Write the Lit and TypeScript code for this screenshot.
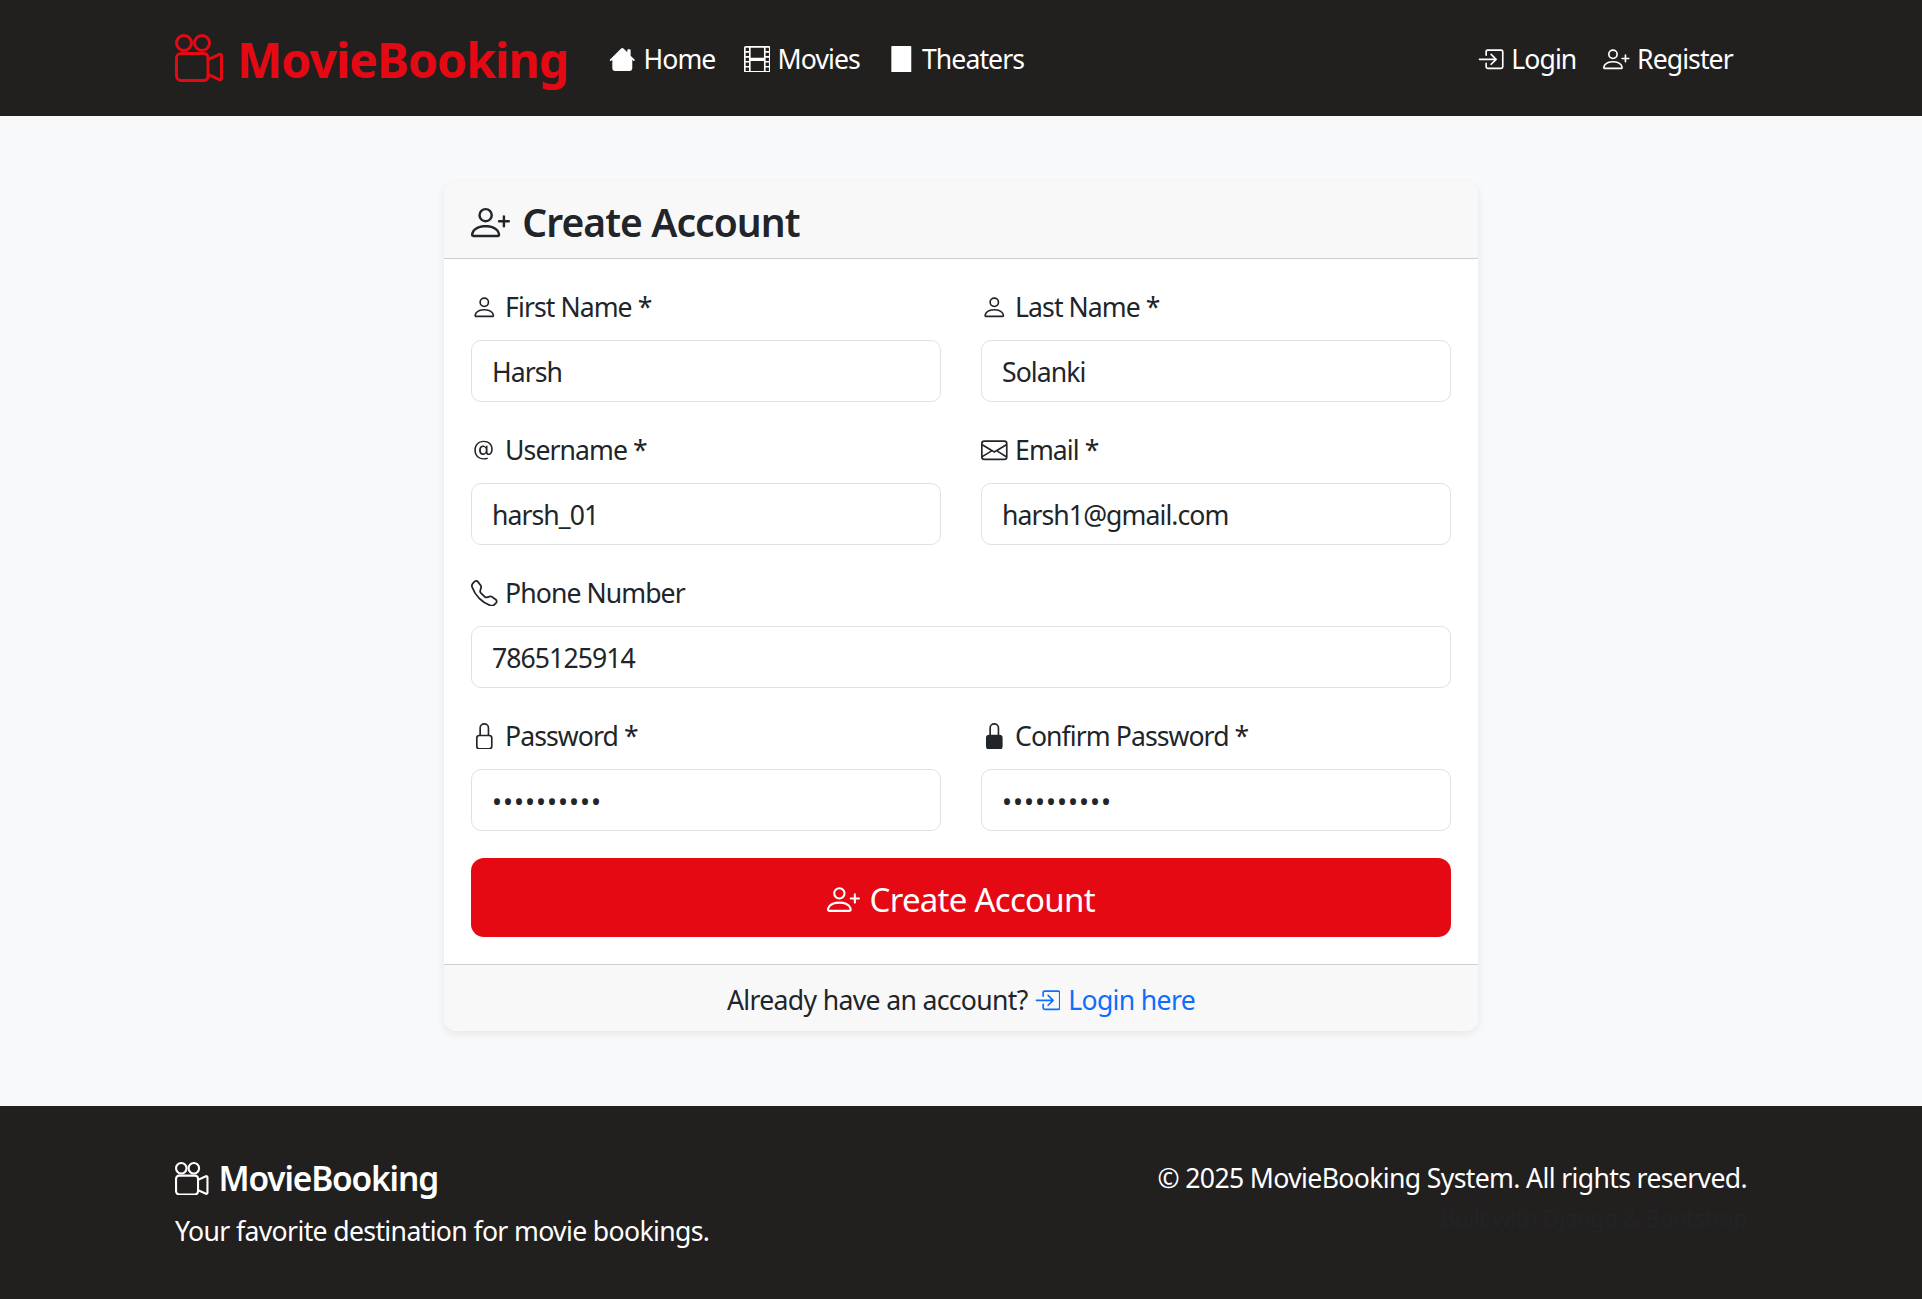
import { LitElement, html, css, svg } from 'lit';
import { customElement } from 'lit/decorators.js';

const ICONS = {
  reels: svg`<path d="M6 3a3 3 0 1 1-6 0 3 3 0 0 1 6 0M1 3a2 2 0 1 0 4 0 2 2 0 0 0-4 0"/><path d="M9 6h.5a2 2 0 0 1 1.983 1.738l3.11-1.382A1 1 0 0 1 16 7.269v7.462a1 1 0 0 1-1.406.913l-3.111-1.382A2 2 0 0 1 9.5 16H2a2 2 0 0 1-2-2V8a2 2 0 0 1 2-2zm6 8.73V7.27l-3.5 1.555v4.35zM1 8v6a1 1 0 0 0 1 1h7.5a1 1 0 0 0 1-1V8a1 1 0 0 0-1-1H2a1 1 0 0 0-1 1"/><path d="M9 6a3 3 0 1 0 0-6 3 3 0 0 0 0 6M7 3a2 2 0 1 1 4 0 2 2 0 0 1-4 0"/>`,
  house: svg`<path d="M8.707 1.5a1 1 0 0 0-1.414 0L.646 8.146a.5.5 0 0 0 .708.708L2 8.207V13.5A1.5 1.5 0 0 0 3.5 15h9a1.5 1.5 0 0 0 1.5-1.5V8.207l.646.647a.5.5 0 0 0 .708-.708L13 5.793V2.5a.5.5 0 0 0-.5-.5h-1a.5.5 0 0 0-.5.5v1.293z"/>`,
  film: svg`<path d="M0 1a1 1 0 0 1 1-1h14a1 1 0 0 1 1 1v14a1 1 0 0 1-1 1H1a1 1 0 0 1-1-1zm4 0v6h8V1zm8 8H4v6h8zM1 1v2h2V1zm2 3H1v2h2zM1 7v2h2V7zm2 3H1v2h2zm-2 3v2h2v-2zM15 1h-2v2h2zm-2 3v2h2V4zm2 3h-2v2h2zm-2 3v2h2v-2zm2 3h-2v2h2z"/>`,
  file: svg`<path d="M2.5 0h11a.5.5 0 0 1 .5.5v15a.5.5 0 0 1-.5.5h-11a.5.5 0 0 1-.5-.5V.5a.5.5 0 0 1 .5-.5"/>`,
  login: svg`<path fill-rule="evenodd" d="M6 3.5a.5.5 0 0 1 .5-.5h8a.5.5 0 0 1 .5.5v9a.5.5 0 0 1-.5.5h-8a.5.5 0 0 1-.5-.5v-2a.5.5 0 0 0-1 0v2A1.5 1.5 0 0 0 6.5 14h8a1.5 1.5 0 0 0 1.5-1.5v-9A1.5 1.5 0 0 0 14.5 2h-8A1.5 1.5 0 0 0 5 3.5v2a.5.5 0 0 0 1 0z"/><path fill-rule="evenodd" d="M11.854 8.354a.5.5 0 0 0 0-.708l-3-3a.5.5 0 1 0-.708.708L10.293 7.5H1.5a.5.5 0 0 0 0 1h8.793l-2.147 2.146a.5.5 0 0 0 .708.708z"/>`,
  personPlus: svg`<path d="M6 8a3 3 0 1 0 0-6 3 3 0 0 0 0 6m2-3a2 2 0 1 1-4 0 2 2 0 0 1 4 0m4 8c0 1-1 1-1 1H1s-1 0-1-1 1-4 6-4 6 3 6 4m-1-.004c-.001-.246-.154-.986-.832-1.664C9.516 10.68 8.289 10 6 10s-3.516.68-4.168 1.332c-.678.678-.83 1.418-.832 1.664z"/><path fill-rule="evenodd" d="M13.5 5a.5.5 0 0 1 .5.5V7h1.5a.5.5 0 0 1 0 1H14v1.5a.5.5 0 0 1-1 0V8h-1.5a.5.5 0 0 1 0-1H13V5.5a.5.5 0 0 1 .5-.5"/>`,
  person: svg`<path d="M8 8a3 3 0 1 0 0-6 3 3 0 0 0 0 6m2-3a2 2 0 1 1-4 0 2 2 0 0 1 4 0m4 8c0 1-1 1-1 1H3s-1 0-1-1 1-4 6-4 6 3 6 4m-1-.004c-.001-.246-.154-.986-.832-1.664C11.516 10.68 10.289 10 8 10s-3.516.68-4.168 1.332c-.678.678-.83 1.418-.832 1.664z"/>`,
  at: svg`<path d="M13.106 7.222c0-2.967-2.249-5.032-5.482-5.032-3.35 0-5.646 2.318-5.646 5.702 0 3.493 2.235 5.708 5.762 5.708.862 0 1.689-.123 2.304-.335v-.862c-.43.199-1.354.328-2.29.328-2.926 0-4.813-1.88-4.813-4.798 0-2.844 1.921-4.881 4.594-4.881 2.735 0 4.608 1.688 4.608 4.156 0 1.682-.554 2.769-1.416 2.769-.492 0-.772-.28-.772-.76V5.206H8.923v.834h-.11c-.266-.595-.881-.964-1.6-.964-1.4 0-2.378 1.162-2.378 2.823 0 1.737.957 2.906 2.379 2.906.8 0 1.415-.39 1.709-1.087h.11c.081.67.703 1.148 1.503 1.148 1.572 0 2.57-1.415 2.57-3.643zm-7.177.704c0-1.197.54-1.907 1.456-1.907.93 0 1.524.738 1.524 1.907S8.308 9.84 7.371 9.84c-.895 0-1.442-.725-1.442-1.914"/>`,
  envelope: svg`<path d="M0 4a2 2 0 0 1 2-2h12a2 2 0 0 1 2 2v8a2 2 0 0 1-2 2H2a2 2 0 0 1-2-2zm2-1a1 1 0 0 0-1 1v.217l7 4.2 7-4.2V4a1 1 0 0 0-1-1zm13 2.383-4.708 2.825L15 11.105zm-.034 6.876-5.64-3.471L8 9.583l-1.326-.795-5.64 3.47A1 1 0 0 0 2 13h12a1 1 0 0 0 .966-.741M1 11.105l4.708-2.897L1 5.383z"/>`,
  telephone: svg`<path d="M3.654 1.328a.678.678 0 0 0-1.015-.063L1.605 2.3c-.483.484-.661 1.169-.45 1.77a17.6 17.6 0 0 0 4.168 6.608 17.6 17.6 0 0 0 6.608 4.168c.601.211 1.286.033 1.77-.45l1.034-1.034a.678.678 0 0 0-.063-1.015l-2.307-1.794a.68.68 0 0 0-.58-.122l-2.19.547a1.75 1.75 0 0 1-1.657-.459L5.482 8.062a1.75 1.75 0 0 1-.46-1.657l.548-2.19a.68.68 0 0 0-.122-.58zM1.884.511a1.745 1.745 0 0 1 2.612.163L6.29 2.98c.329.423.445.974.315 1.494l-.547 2.19a.68.68 0 0 0 .178.643l2.457 2.457a.68.68 0 0 0 .644.178l2.189-.547a1.75 1.75 0 0 1 1.494.315l2.306 1.794c.829.645.905 1.87.163 2.611l-1.034 1.034c-.74.74-1.846 1.065-2.877.702a18.6 18.6 0 0 1-7.01-4.42 18.6 18.6 0 0 1-4.42-7.009c-.362-1.03-.037-2.137.703-2.877z"/>`,
  lock: svg`<path d="M8 1a2 2 0 0 1 2 2v4H6V3a2 2 0 0 1 2-2m3 6V3a3 3 0 0 0-6 0v4a2 2 0 0 0-2 2v5a2 2 0 0 0 2 2h6a2 2 0 0 0 2-2V9a2 2 0 0 0-2-2M5 8h6a1 1 0 0 1 1 1v5a1 1 0 0 1-1 1H5a1 1 0 0 1-1-1V9a1 1 0 0 1 1-1"/>`,
  lockFill: svg`<path d="M8 1a2 2 0 0 1 2 2v4H6V3a2 2 0 0 1 2-2m3 6V3a3 3 0 0 0-6 0v4a2 2 0 0 0-2 2v5a2 2 0 0 0 2 2h6a2 2 0 0 0 2-2V9a2 2 0 0 0-2-2"/>`,
};

type IconName = keyof typeof ICONS;

const icon = (name: IconName) =>
  html`<svg class="bi" viewBox="0 0 16 16" fill="currentColor" aria-hidden="true">${ICONS[name]}</svg>`;

interface Field {
  icon: IconName;
  label: string;
  value: string;
  type?: string;
  wide?: boolean;
}

const FIELDS: Field[] = [
  { icon: 'person', label: 'First Name *', value: 'Harsh' },
  { icon: 'person', label: 'Last Name *', value: 'Solanki' },
  { icon: 'at', label: 'Username *', value: 'harsh_01' },
  { icon: 'envelope', label: 'Email *', value: 'harsh1@gmail.com' },
  { icon: 'telephone', label: 'Phone Number', value: '7865125914', wide: true },
  { icon: 'lock', label: 'Password *', value: 'harsh12345', type: 'password' },
  { icon: 'lockFill', label: 'Confirm Password *', value: 'harsh12345', type: 'password' },
];

@customElement('app-root')
export class AppRoot extends LitElement {
  static override styles = css`
    :host {
      display: flex;
      flex-direction: column;
      min-height: 1299px;
      background: #f8f9fa;
      color: #212529;
      font-family: 'Noto Sans', 'Open Sans', sans-serif;
      font-size: 26.6px;
      line-height: 40px;
      letter-spacing: -0.035em;
    }

    .bi {
      display: inline-block;
      width: 1em;
      height: 1em;
      margin-right: 1.5px;
      vertical-align: -0.125em;
      flex: none;
    }

    /* ── Navbar ── */
    .navbar {
      display: flex;
      align-items: center;
      height: 116px;
      padding: 0 176px 0 175px;
      background: #221f1f;
      color: #fff;
    }
    .brand {
      display: flex;
      align-items: center;
      gap: 14px;
      color: #e50914;
      font-size: 48px;
      font-weight: 700;
      line-height: 66px;
      margin-right: 28px;
    }
    .brand span {
      padding-top: 4px;
    }
    .brand .bi {
      width: 48px;
      height: 48px;
      margin-right: 0;
    }
    .nav-list {
      display: flex;
      align-items: center;
      gap: 1.5px;
    }
    .nav-list.end {
      gap: 0;
      margin-left: auto;
    }
    .nav-link {
      padding: 2px 13.3px 0;
      color: inherit;
      text-decoration: none;
      white-space: nowrap;
    }

    /* ── Card ── */
    main {
      flex: 1;
      display: flex;
      justify-content: center;
      align-items: flex-start;
      padding-top: 66px;
    }
    .card {
      width: 1034px;
      background: #fff;
      border-radius: 13px;
      box-shadow: 0 3px 10px rgba(0, 0, 0, 0.08);
      overflow: hidden;
    }
    .card-header {
      padding: 16px 27px 0;
      height: 77px;
      box-sizing: border-box;
      background: #f8f8f8;
      border-bottom: 1px solid #cfcfcf;
    }
    h3 {
      margin: 0;
      font-size: 39px;
      font-weight: 600;
      line-height: 48px;
    }
    h3 .bi {
      margin-right: 3px;
    }
    .card-body {
      padding: 27px;
    }
    form {
      display: grid;
      grid-template-columns: 1fr 1fr;
      column-gap: 40px;
      row-gap: 27px;
    }
    .field.wide {
      grid-column: 1 / -1;
    }
    label {
      display: block;
      line-height: 42px;
      margin-bottom: 12px;
    }
    input {
      display: block;
      box-sizing: border-box;
      width: 100%;
      height: 62px;
      padding: 1px 20px 0;
      border: 1px solid #dee2e6;
      border-radius: 10px;
      background: #fff;
      color: #212529;
      font: inherit;
      letter-spacing: inherit;
      outline: none;
    }
    input[type='password'] {
      padding-top: 4px;
      letter-spacing: 1px;
    }
    .submit {
      grid-column: 1 / -1;
      height: 79px;
      padding: 4px 0 0;
      border: none;
      border-radius: 13px;
      background: #e50914;
      color: #fff;
      font: inherit;
      font-size: 33px;
      letter-spacing: -0.022em;
      cursor: pointer;
    }
    .card-footer {
      padding: 15px 27px 11px;
      background: #f8f8f8;
      border-top: 1px solid #cfcfcf;
      text-align: center;
      letter-spacing: -0.025em;
    }
    .card-footer a {
      color: #0d6efd;
      text-decoration: none;
    }

    /* ── Footer ── */
    footer {
      display: flex;
      justify-content: space-between;
      height: 193px;
      box-sizing: border-box;
      padding: 52px 175px 0;
      background: #221f1f;
      color: #fff;
      letter-spacing: -0.024em;
    }
    h5 {
      margin: 0 0 13px;
      font-size: 33.5px;
      font-weight: 600;
      line-height: 40px;
      letter-spacing: -0.035em;
    }
    h5 .bi {
      margin-right: 2.5px;
    }
    footer p {
      margin: 0;
    }
    .copy {
      text-align: right;
    }
    .built {
      margin-top: 3px;
      font-size: 23.3px;
      line-height: 35px;
      color: rgba(33, 37, 41, 0.75);
    }
  `;

  override render() {
    return html`
      <nav class="navbar">
        <a class="brand">${icon('reels')}<span>MovieBooking</span></a>
        <div class="nav-list">
          <a class="nav-link">${icon('house')} Home</a>
          <a class="nav-link">${icon('film')} Movies</a>
          <a class="nav-link">${icon('file')} Theaters</a>
        </div>
        <div class="nav-list end">
          <a class="nav-link">${icon('login')} Login</a>
          <a class="nav-link">${icon('personPlus')} Register</a>
        </div>
      </nav>

      <main>
        <section class="card">
          <header class="card-header">
            <h3>${icon('personPlus')} Create Account</h3>
          </header>
          <div class="card-body">
            <form>
              ${FIELDS.map(
                (f) => html`
                  <div class="field ${f.wide ? 'wide' : ''}">
                    <label>${icon(f.icon)} ${f.label}</label>
                    <input type=${f.type ?? 'text'} .value=${f.value} />
                  </div>
                `,
              )}
              <button class="submit" type="button">${icon('personPlus')} Create Account</button>
            </form>
          </div>
          <div class="card-footer">
            Already have an account? <a>${icon('login')} Login here</a>
          </div>
        </section>
      </main>

      <footer>
        <div>
          <h5>${icon('reels')} MovieBooking</h5>
          <p>Your favorite destination for movie bookings.</p>
        </div>
        <div class="copy">
          <p>© 2025 MovieBooking System. All rights reserved.</p>
          <p class="built">Built with Django &amp; Bootstrap</p>
        </div>
      </footer>
    `;
  }
}
